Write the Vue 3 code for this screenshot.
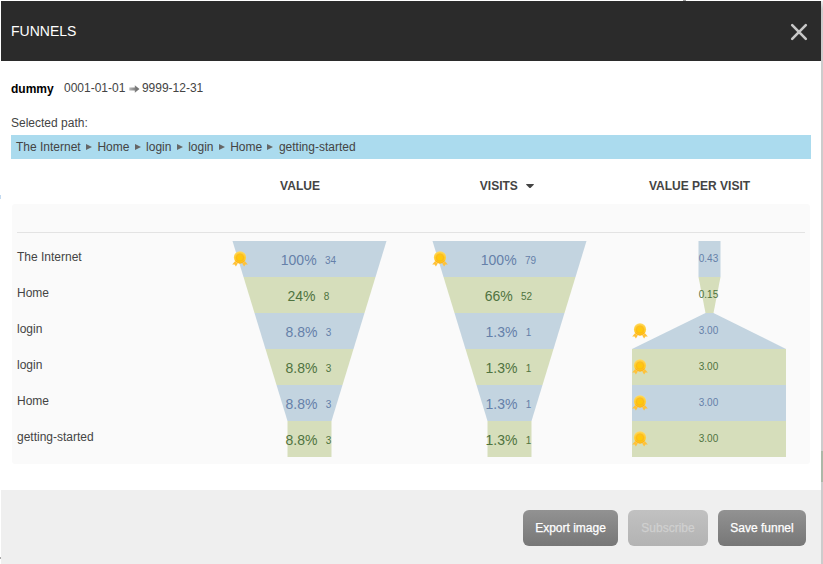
<script setup>
const path = ['The Internet', 'Home', 'login', 'login', 'Home', 'getting-started']

// Each segment spans from its own top width to the next segment's top width.
const columns = [
  {
    key: 'value',
    title: 'VALUE',
    widths: [154, 132, 110, 88, 66, 44, 44],
    best: [0],
    cells: [['100%', '34'], ['24%', '8'], ['8.8%', '3'], ['8.8%', '3'], ['8.8%', '3'], ['8.8%', '3']],
  },
  {
    key: 'visits',
    title: 'VISITS',
    sorted: true,
    widths: [154, 132, 110, 88, 66, 44, 44],
    best: [0],
    cells: [['100%', '79'], ['66%', '52'], ['1.3%', '1'], ['1.3%', '1'], ['1.3%', '1'], ['1.3%', '1']],
  },
  {
    key: 'ratio',
    title: 'VALUE PER VISIT',
    widths: [22, 22, 8, 154, 154, 154, 154],
    best: [2, 3, 4, 5],
    cells: [['', '0.43'], ['', '0.15'], ['', '3.00'], ['', '3.00'], ['', '3.00'], ['', '3.00']],
  },
]

const rowHeight = 36
function segment(col, i) {
  const a = col.widths[i] / 2
  const b = col.widths[i + 1] / 2
  const y = i * rowHeight
  const center = (w) => (col.key === 'ratio' && w === 154 ? 77 : 77.5)
  const top = center(col.widths[i])
  const bottom = center(col.widths[i + 1])
  return `${top - a},${y} ${top + a},${y} ${bottom + b},${y + rowHeight} ${bottom - b},${y + rowHeight}`
}
</script>

<template>
  <div class="page">
    <section class="dialog">
      <header class="titlebar">
        <h1>FUNNELS</h1>
        <button class="close" aria-label="Close">
          <svg width="18" height="18" viewBox="0 0 18 18">
            <path d="M2.2 2.2L15.8 15.8M15.8 2.2L2.2 15.8" fill="none" stroke="#c8c8c8" stroke-width="2.6" stroke-linecap="round" />
          </svg>
        </button>
      </header>

      <main class="content">
        <div class="meta">
          <strong>dummy</strong>
          <span>0001-01-01</span>
          <svg class="arrow" width="11" height="8" viewBox="0 0 11 8">
            <defs>
              <linearGradient id="arrow-fill">
                <stop offset="0" stop-color="#b8b8b8" />
                <stop offset="0.7" stop-color="#777" />
              </linearGradient>
            </defs>
            <path d="M0.3 2.4H5.8V0.2L10.5 4L5.8 7.8V5.6H0.3Z" fill="url(#arrow-fill)" />
          </svg>
          <span>9999-12-31</span>
        </div>
        <div class="caption">Selected path:</div>
        <nav class="path">
          <template v-for="(step, i) in path" :key="i">
            <svg v-if="i" class="sep" width="6" height="6" viewBox="0 0 6 6">
              <path d="M0 0L6 3L0 6Z" fill="#666" />
            </svg>
            <span>{{ step }}</span>
          </template>
        </nav>

        <div class="heads">
          <div v-for="c in columns" :key="c.key" class="head" :class="{ sorted: c.sorted }">
            {{ c.title }}
            <svg v-if="c.sorted" class="caret" width="8" height="5" viewBox="0 0 8 5">
              <path d="M0 0.4Q0 0 .5 0H7.5Q8 0 8 .4L4.5 4H3.5Z" fill="#444" />
            </svg>
          </div>
        </div>

        <div class="panel">
          <div class="rule"></div>
          <div class="chart">
            <ul class="labels">
              <li v-for="(step, i) in path" :key="i">{{ step }}</li>
            </ul>
            <svg v-for="c in columns" :key="c.key" class="funnel" width="154" height="216" viewBox="0 0 154 216">
              <defs>
                <radialGradient :id="'gold-' + c.key" cx="0.5" cy="0.6" r="0.6">
                  <stop offset="0" stop-color="#ffcb05" />
                  <stop offset="0.5" stop-color="#ffc416" />
                  <stop offset="1" stop-color="#ffdb66" />
                </radialGradient>
              </defs>
              <polygon
                v-for="(cell, i) in c.cells"
                :key="'p' + i"
                :points="segment(c, i)"
                :class="i % 2 ? 'green' : 'blue'"
              />
              <g v-for="i in c.best" :key="'m' + i" :transform="`translate(0 ${i * 36 + 10})`">
                <path d="M3.2 10L0.2 13.5L2.6 13.4L3.9 15.6L5.8 12.4Z" fill="#ffc23a" />
                <path d="M12.8 10L15.8 13.5L13.4 13.4L12.1 15.6L10.2 12.4Z" fill="#ffc23a" />
                <circle cx="8" cy="6.4" r="6.1" :fill="`url(#gold-${c.key})`" />
                <circle cx="8" cy="6.5" r="3.6" fill="none" stroke="#f9b21c" stroke-width="0.6" />
                <path d="M3.4 9.6Q8 14.6 12.6 9.6" fill="none" stroke="#ffb11c" stroke-width="1" />
              </g>
              <template v-for="(cell, i) in c.cells" :key="'t' + i">
                <text v-if="cell[0]" x="76.4" :y="i * 36 + 24" class="big" :class="i % 2 ? 'ink-green' : 'ink-blue'">{{ cell[0] }}<tspan class="small" dx="8.3" dy="-1">{{ cell[1] }}</tspan></text>
                <text v-else x="76.5" :y="i * 36 + 21" class="small" :class="i % 2 ? 'ink-green' : 'ink-blue'">{{ cell[1] }}</text>
              </template>
            </svg>
          </div>
        </div>
      </main>

      <footer class="actions">
        <button class="btn export">Export image</button>
        <button class="btn subscribe" disabled>Subscribe</button>
        <button class="btn save">Save funnel</button>
      </footer>
    </section>
    <div class="edge"><i></i></div>
  </div>
</template>

<style>
body { background: #fff; overflow: hidden; }
</style>

<style scoped>
.page {
  box-sizing: border-box;
  width: 823px;
  height: 564px;
  padding: 1px 0 0 1px;
  display: flex;
  font: 12px/16px "Liberation Sans", Arial, sans-serif;
  color: #444;
  overflow: hidden;
  background:
    linear-gradient(#c3daf0, #c3daf0) 0 195px / 1px 4px no-repeat,
    linear-gradient(#aaa, #aaa) 0 557px / 1px 2px no-repeat,
    linear-gradient(#999, #999) 683px 0 / 3px 1px no-repeat,
    #fff;
}
.dialog {
  width: 820px;
  height: 563px;
  display: flex;
  flex-direction: column;
  background: #fff;
}
.edge {
  width: 2px;
  padding-top: 450px;
  box-sizing: border-box;
  background: linear-gradient(#eee, #ccc 8px);
}
.edge i {
  display: block;
  height: 31px;
  background: #acb8a8;
}
.titlebar {
  box-sizing: border-box;
  height: 60px;
  background: #2b2b2b;
  display: flex;
  align-items: center;
  justify-content: space-between;
  padding: 0 13px 0 10px;
}
h1 {
  margin: 0;
  font-size: 14px;
  line-height: 20px;
  font-weight: normal;
  color: #fff;
}
.close {
  display: block;
  width: 18px;
  height: 18px;
  padding: 0;
  margin-top: 2px;
  border: 0;
  background: none;
}
.close svg { display: block; }
.content {
  height: 429px;
  box-sizing: border-box;
  padding: 19px 10px 0;
}
.meta {
  display: flex;
  height: 16px;
  align-items: center;
}
.meta strong {
  color: #000;
  margin: 2px 10.3px 0 0;
}
.arrow { margin: 1px 2px 0 3.5px; }
.caption { margin-top: 19px; }
.path {
  margin-top: 4px;
  height: 24px;
  background: #abdbee;
  display: flex;
  align-items: center;
  padding-left: 5px;
}
.sep { margin: 0 5.5px 0 5.2px; }
.heads {
  display: grid;
  grid-template-columns: 200px 200px 199px;
  padding-left: 189px;
  height: 45px;
}
.head {
  font-weight: bold;
  text-align: center;
  padding-top: 19px;
}
.sorted { padding-left: 14px; }
.caret { margin: 0 0 1px 5px; }
.panel {
  box-sizing: border-box;
  height: 260px;
  width: 798px;
  margin-left: 1px;
  border-radius: 3px;
  background: #fafafa;
  padding: 28px 5px 0;
}
.rule { height: 1px; background: #e3e3e3; }
.chart {
  display: flex;
  padding-top: 8px;
}
.labels {
  list-style: none;
  margin: 0;
  padding: 0;
  width: 215px;
}
.labels li {
  height: 36px;
  line-height: 32px;
}
.funnel { display: block; flex: none; overflow: visible; }
.funnel + .funnel { margin-left: 46px; }
.blue { fill: #c3d4e0; }
.green { fill: #d6debb; }
text { text-anchor: middle; }
.big { font-size: 14px; }
.small { font-size: 10px; }
.ink-blue { fill: #6580a9; }
.ink-green { fill: #4f7340; }
.actions {
  flex: 1;
  background: #efefef;
  display: flex;
  justify-content: flex-end;
  align-items: flex-start;
  gap: 10px;
  padding: 20px 15px 0 0;
}
.btn {
  height: 36px;
  padding: 0;
  border: 0;
  border-radius: 6px;
  background: linear-gradient(#929292, #777);
  color: #fff;
  font: 12px/16px "Liberation Sans", Arial, sans-serif;
  -webkit-text-stroke: 0.25px currentColor;
}
.export { width: 95px; }
.subscribe {
  width: 80px;
  background: linear-gradient(#c1c1c1, #b3b3b3);
  color: #d0d0d0;
}
.save { width: 88px; }
</style>
